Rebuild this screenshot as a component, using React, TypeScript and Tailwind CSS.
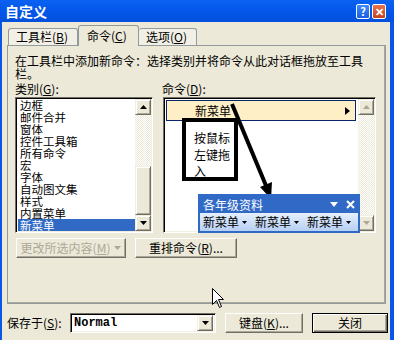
import React from 'react';

const categorias = [
  '边框',
  '邮件合并',
  '窗体',
  '控件工具箱',
  '所有命令',
  '宏',
  '字体',
  '自动图文集',
  '样式',
  '内置菜单',
  '新菜单',
];

function Flecha({ dir, disabled }: { dir: 'up' | 'down'; disabled?: boolean }) {
  const color = disabled ? '#ACA899' : '#000000';
  return (
    <svg width="7" height="4" viewBox="0 0 7 4">
      {dir === 'up' ? (
        <path d="M3.5 0 L7 4 L0 4 Z" fill={color} />
      ) : (
        <path d="M0 0 L7 0 L3.5 4 Z" fill={color} />
      )}
    </svg>
  );
}

function BotonScroll({ dir, disabled }: { dir: 'up' | 'down'; disabled?: boolean }) {
  return (
    <div className="flex h-[16px] w-[16px] shrink-0 items-center justify-center border border-t-[#F1EFE2] border-l-[#F1EFE2] border-r-[#716F64] border-b-[#716F64] bg-[#ECE9D8] shadow-[inset_1px_1px_0_#ffffff,inset_-1px_-1px_0_#ACA899]">
      <Flecha dir={dir} disabled={disabled} />
    </div>
  );
}

function Mnemo({ c }: { c: string }) {
  return (
    <>
      (<span className="underline">{c}</span>)
    </>
  );
}

export default function App() {
  return (
    <div className="relative flex h-[340px] w-[394px] flex-col overflow-hidden bg-[#0A56E6] font-['Noto_Sans_CJK_SC',sans-serif] text-[12px] text-black">
      {/* barra de título */}
      <div className="flex h-[22px] shrink-0 items-center justify-between bg-gradient-to-b from-[#0B62F2] via-[#0456EA] to-[#0350DC] pl-[5px] pr-[8px]">
        <span className="text-[14px] leading-[15px] font-bold text-white">自定义</span>
        <div className="flex gap-[2px]">
          <div className="flex h-[15px] w-[14px] items-center justify-center rounded-[2px] border border-white bg-gradient-to-b from-[#3D8BFF] to-[#1A5FE0] text-[11px] leading-none font-bold text-white">
            ?
          </div>
          <div className="flex h-[15px] w-[14px] items-center justify-center rounded-[2px] border border-white bg-gradient-to-b from-[#E8744F] to-[#C4401E] text-[11px] leading-none font-bold text-white">
            ✕
          </div>
        </div>
      </div>

      {/* cuerpo */}
      <div className="ml-[2px] mr-[4px] flex flex-1 flex-col bg-[#ECE9D8]">
        {/* pestañas */}
        <div className="flex h-[23px] shrink-0 items-end pl-[6px]">
          <div className="flex h-[17px] w-[70px] items-center rounded-t-[3px] border border-b-0 border-[#919B9C] bg-[#F2F0E6] pl-[7px] leading-[14px]">
            工具栏<Mnemo c="B" />
          </div>
          <div className="relative z-10 -mb-[1px] flex h-[21px] w-[61px] items-center rounded-t-[3px] border border-b-0 border-[#919B9C] bg-[#ECE9D8] pl-[8px] leading-[14px]">
            命令<Mnemo c="C" />
          </div>
          <div className="flex h-[17px] w-[58px] items-center rounded-t-[3px] border border-b-0 border-l-0 border-[#919B9C] bg-[#F2F0E6] pl-[7px] leading-[14px]">
            选项<Mnemo c="O" />
          </div>
        </div>

        {/* panel */}
        <div className="ml-[5px] h-[259px] w-[379px] shrink-0 border border-[#919B9C] pl-[7px] pt-[8px] shadow-[inset_-1px_-1px_0_#ACA899]">
          <p className="leading-[13px]">
            在工具栏中添加新命令：选择类别并将命令从此对话框拖放至工具
            <br />
            栏。
          </p>
          <div className="mt-[2px] flex h-[13px] leading-[13px]">
            <span className="w-[147px]">
              类别<Mnemo c="G" />:
            </span>
            <span>
              命令<Mnemo c="D" />:
            </span>
          </div>

          <div className="mt-[2px] flex gap-[10px]">
            {/* lista de categorías */}
            <div className="flex h-[136px] w-[138px] border border-t-[#716F64] border-l-[#716F64] border-r-white border-b-white bg-white p-[1px] shadow-[inset_1px_1px_0_#000000,inset_-1px_-1px_0_#F1EFE2]">
              <div className="flex flex-1 flex-col pl-[1px]">
                {categorias.map((c, i) => (
                  <div
                    key={c}
                    className={
                      i === categorias.length - 1
                        ? 'h-[12px] shrink-0 bg-[#316AC5] pl-[2px] text-[11.5px] leading-[12px] text-white'
                        : 'h-[12px] shrink-0 pl-[2px] text-[11.5px] leading-[12px]'
                    }
                  >
                    {c}
                  </div>
                ))}
              </div>
              <div className="flex w-[16px] flex-col">
                <BotonScroll dir="up" />
                <div className="h-[51px] bg-[repeating-conic-gradient(#ffffff_0%_25%,#ECE9D8_0%_50%)] bg-[length:2px_2px]" />
                <div className="h-[49px] border border-t-[#F1EFE2] border-l-[#F1EFE2] border-r-[#716F64] border-b-[#716F64] bg-[#ECE9D8] shadow-[inset_1px_1px_0_#ffffff,inset_-1px_-1px_0_#ACA899]" />
                <BotonScroll dir="down" />
              </div>
            </div>

            {/* lista de comandos */}
            <div className="flex h-[136px] w-[213px] border border-t-[#716F64] border-l-[#716F64] border-r-white border-b-white bg-white p-[1px] pl-[2px] shadow-[inset_1px_1px_0_#000000,inset_-1px_-1px_0_#F1EFE2]">
              <div className="flex-1 pt-[1px]">
                <div className="flex h-[21px] items-center justify-between border border-[#0A246A] bg-[#FFEFC6] pl-[28px] pr-[5px] leading-[12px]">
                  <span>新菜单</span>
                  <svg width="5" height="8" viewBox="0 0 5 8">
                    <path d="M0 0 L5 4 L0 8 Z" fill="#000" />
                  </svg>
                </div>
              </div>
              <div className="ml-[2px] flex w-[16px] flex-col">
                <BotonScroll dir="up" disabled />
                <div className="flex-1 bg-[repeating-conic-gradient(#ffffff_0%_25%,#ECE9D8_0%_50%)] bg-[length:2px_2px]" />
                <BotonScroll dir="down" disabled />
              </div>
            </div>
          </div>

          {/* botones */}
          <div className="mt-[5px] flex gap-[9px] pl-[1px]">
            <div className="flex h-[20px] w-[110px] items-center justify-center gap-[4px] border border-t-white border-l-white border-r-[#716F64] border-b-[#716F64] leading-[12px] text-[#ACA899] shadow-[inset_-1px_-1px_0_#ACA899]">
              <span>
                更改所选内容(<span className="underline">M</span>)
              </span>
              <Flecha dir="down" disabled />
            </div>
            <div className="flex h-[20px] w-[102px] items-center justify-center border border-t-white border-l-white border-r-[#716F64] border-b-[#716F64] leading-[12px] shadow-[inset_-1px_-1px_0_#ACA899]">
              重排命令<Mnemo c="R" />...
            </div>
          </div>
        </div>

        {/* fila inferior */}
        <div className="mt-[9px] flex h-[20px] items-center pl-[5px]">
          <span className="w-[63px] leading-[12px]">
            保存于<Mnemo c="S" />:
          </span>
          <div className="flex h-[20px] w-[146px] items-center border border-t-[#716F64] border-l-[#716F64] border-r-white border-b-white bg-white p-[2px] pl-[3px] shadow-[inset_1px_1px_0_#000000,inset_-1px_-1px_0_#F1EFE2]">
            <span className="flex-1 font-['Liberation_Mono',monospace] text-[12px] leading-[12px] font-bold">Normal</span>
            <BotonScroll dir="down" />
          </div>
          <div className="ml-[9px] flex h-[20px] w-[78px] items-center justify-center border border-t-white border-l-white border-r-[#716F64] border-b-[#716F64] leading-[12px] shadow-[inset_-1px_-1px_0_#ACA899]">
            键盘<Mnemo c="K" />...
          </div>
          <div className="ml-[9px] flex h-[20px] w-[76px] items-center justify-center border border-black leading-[12px] shadow-[inset_1px_1px_0_#ffffff,inset_-1px_-1px_0_#716F64,inset_-2px_-2px_0_#ACA899]">
            关闭
          </div>
        </div>
      </div>

      {/* anotación */}
      <div className="absolute left-[182px] top-[118px] flex h-[63px] w-[56px] flex-col border-[4px] border-black bg-white pl-[8px] pt-[8px] text-[12px] leading-[16.5px]">
        <span>按鼠标</span>
        <span>左键拖</span>
        <span>入</span>
      </div>

      <svg className="absolute left-0 top-0" width="394" height="340" viewBox="0 0 394 340">
        <line x1="232" y1="104" x2="267" y2="188" stroke="#000" strokeWidth="4" />
        <path d="M271 199 L260 187 L272 182 Z" fill="#000" />
      </svg>

      {/* barra flotante */}
      <div className="absolute left-[198px] top-[194px] flex h-[39px] w-[162px] flex-col border-[2px] border-[#3169C6] bg-[#3169C6]">
        <div className="flex h-[17px] items-center justify-between pl-[3px] pr-[3px] text-[12px] leading-[12px] text-white">
          <span>各年级资料</span>
          <div className="flex items-center gap-[8px]">
            <svg width="8" height="5" viewBox="0 0 8 5">
              <path d="M0 0 L8 0 L4 5 Z" fill="#fff" />
            </svg>
            <svg width="9" height="9" viewBox="0 0 9 9">
              <path d="M1 1 L8 8 M8 1 L1 8" stroke="#fff" strokeWidth="2" />
            </svg>
          </div>
        </div>
        <div className="flex flex-1 items-center gap-[8px] bg-gradient-to-b from-[#E6F0FD] to-[#B6CFF3] pl-[3px] leading-[12px]">
          {[0, 1, 2].map((i) => (
            <div key={i} className="flex items-center gap-[3px]">
              <span>新菜单</span>
              <svg width="5" height="3" viewBox="0 0 5 3">
                <path d="M0 0 L5 0 L2.5 3 Z" fill="#000" />
              </svg>
            </div>
          ))}
        </div>
      </div>

      {/* cursor */}
      <svg className="absolute left-[212px] top-[288px]" width="13" height="21" viewBox="0 0 13 21">
        <path d="M0.5 0.5 L0.5 16.5 L4.5 12.5 L7.5 19.5 L9.5 18.5 L6.5 11.5 L11.5 11.5 Z" fill="#fff" stroke="#000" strokeWidth="1" />
      </svg>
    </div>
  );
}
